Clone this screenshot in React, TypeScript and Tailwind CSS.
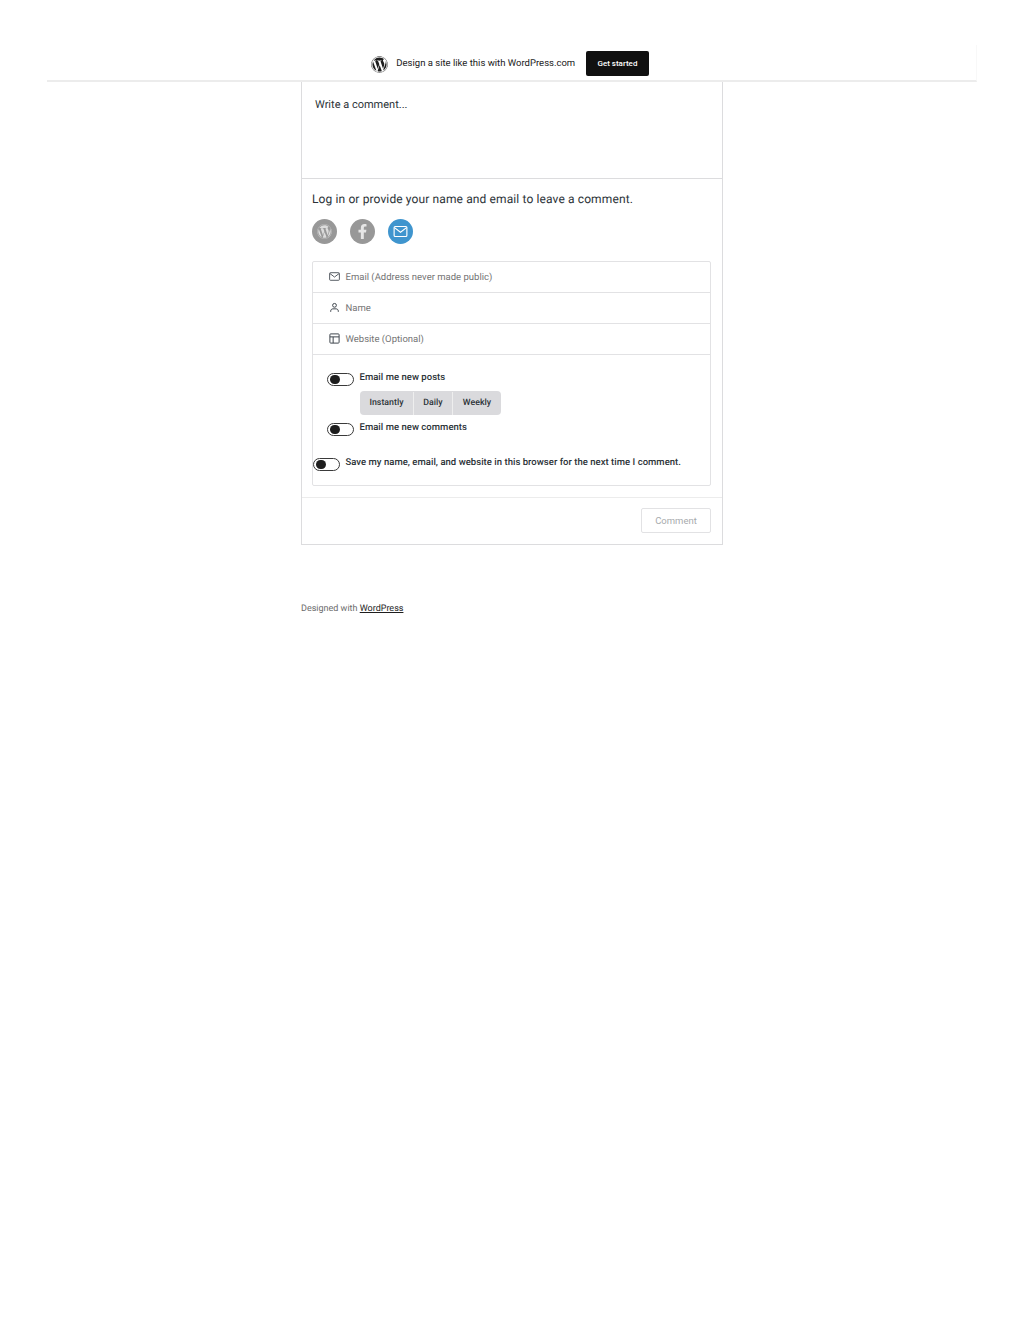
import React from 'react';
import { FaWordpress, FaFacebookF } from 'react-icons/fa';

const MailIcon = ({ className }: { className: string }) => (
  <svg viewBox="0 0 24 24" fill="none" stroke="currentColor" strokeWidth="1.6" className={className}>
    <rect x="3" y="5" width="18" height="14" rx="1.5" />
    <path d="M3.500 6.500 12 13l8.500-6.500" />
  </svg>
);

const UserIcon = ({ className }: { className: string }) => (
  <svg viewBox="0 0 24 24" fill="none" stroke="currentColor" strokeWidth="1.8" className={className}>
    <circle cx="12" cy="8" r="3.500" />
    <path d="M5 20v-1.500c0-2.500 2-4 4-4h6c2 0 4 1.500 4 4V20" />
  </svg>
);

const LayoutIcon = ({ className }: { className: string }) => (
  <svg viewBox="0 0 24 24" fill="none" stroke="currentColor" strokeWidth="1.8" className={className}>
    <rect x="3.500" y="3.500" width="17" height="17" rx="1.500" />
    <path d="M3.500 9h17M9.500 9v11.500" />
  </svg>
);

const Toggle = () => (
  <span className="flex h-[13px] w-[26.500px] shrink-0 items-center rounded-full border border-[#3a3a3a] bg-white pl-[2px]">
    <span className="h-[9.500px] w-[9.500px] rounded-full bg-[#1e1e1e]" />
  </span>
);

const Field = ({ icon, label }: { icon: React.ReactNode; label: string }) => (
  <div className="flex h-[31px] items-center border-b border-[#e2e2e4] pl-[14.500px] text-[9.500px] text-[#757575]">
    <span className="-mt-[1px] flex w-[18px] text-[#3c434a]">{icon}</span>
    <span className="pt-[2px]">{label}</span>
  </div>
);

export default function App() {
  return (
    <div className="min-h-[1325px] bg-white font-['Roboto',sans-serif] [text-rendering:geometricPrecision]">
      <div className="mx-[47px] mt-[45px] flex h-[37px] justify-center border-r border-b-2 border-r-[#f8f8f8] border-b-[#ececec] pt-[6px] pr-[3px]">
        <div className="flex h-[25px] items-center">
          <FaWordpress className="mt-[1px] h-[17px] w-[17px] text-[#1e1e1e]" />
          <span className="ml-[8px] pt-[1px] text-[9.500px] text-[#222]">
            Design a site like this with WordPress.com
          </span>
          <button className="ml-[11px] h-[25px] w-[62.500px] rounded-[2px] bg-[#101010] text-[8px] font-medium text-white">
            Get started
          </button>
        </div>
      </div>

      <div className="mx-auto w-[422px]">
        <div className="border-x border-b border-[#dcdcde]">
          <div className="h-[97px] border-b border-[#dcdcde] px-[13px] pt-[16px] text-[11px] leading-[14px] text-[#2c3338]">
            Write a comment...
          </div>

          <div className="pt-[13px] pr-[11px] pb-[11px] pl-[10px]">
            <p className="text-[12px] leading-[15px] tracking-[0.12px] text-[#2c3338]">
              Log in or provide your name and email to leave a comment.
            </p>
            <div className="mt-[12px] flex gap-[13px]">
              <span className="flex h-[25px] w-[25px] items-center justify-center rounded-full bg-[#989898] text-[#dcdcdc]">
                <FaWordpress className="h-[15px] w-[15px]" />
              </span>
              <span className="flex h-[25px] w-[25px] items-center justify-center rounded-full bg-[#989898] text-[#e6e6e6]">
                <FaFacebookF className="h-[15px] w-[15px]" />
              </span>
              <span className="flex h-[25px] w-[25px] items-center justify-center rounded-full bg-[#3f95ce] text-white">
                <MailIcon className="h-[17px] w-[17px]" />
              </span>
            </div>

            <div className="mt-[17px] rounded-[2px] border border-[#e2e2e4]">
              <Field icon={<MailIcon className="h-[13px] w-[13px]" />} label="Email (Address never made public)" />
              <Field icon={<UserIcon className="h-[13px] w-[13px]" />} label="Name" />
              <Field icon={<LayoutIcon className="h-[13px] w-[13px]" />} label="Website (Optional)" />

              <div className="h-[130px] pt-[17px] text-[9.500px] font-medium tracking-[0.03px] text-[#2c3338]">
                <div className="flex gap-[6px] pl-[14px]">
                  <span className="pt-[1px]"><Toggle /></span>
                  <span className="leading-[11px]">Email me new posts</span>
                </div>
                <div className="mt-[5px] ml-[47px] flex h-[24px] w-fit items-center rounded-[4px] bg-[#dadadd] pt-[1px] text-[8.800px]">
                  <span className="flex h-full w-[54px] items-center justify-center border-r border-[#eeeeee]">Instantly</span>
                  <span className="flex h-full w-[39px] items-center justify-center border-r border-[#eeeeee]">Daily</span>
                  <span className="flex h-full w-[48px] items-center justify-center">Weekly</span>
                </div>
                <div className="mt-[7px] flex gap-[6px] pl-[14px]">
                  <span className="pt-[1px]"><Toggle /></span>
                  <span className="leading-[11px]">Email me new comments</span>
                </div>
                <div className="mt-[21px] flex gap-[6px]">
                  <span className="pt-[1px]"><Toggle /></span>
                  <span className="leading-[11px]">Save my name, email, and website in this browser for the next time I comment.</span>
                </div>
              </div>
            </div>
          </div>

          <div className="flex h-[47px] items-start justify-end border-t border-[#ececec] pt-[10px] pr-[11px]">
            <button className="h-[25px] w-[70px] rounded-[2px] border border-[#e2e2e4] pt-[1px] text-[9.500px] text-[#a7aaad]">
              Comment
            </button>
          </div>
        </div>

        <p className="mt-[59px] text-[9px] leading-[11px] text-[#6b6b6b]">
          Designed with <a className="text-[#1e1e1e] underline">WordPress</a>
        </p>
      </div>
    </div>
  );
}
